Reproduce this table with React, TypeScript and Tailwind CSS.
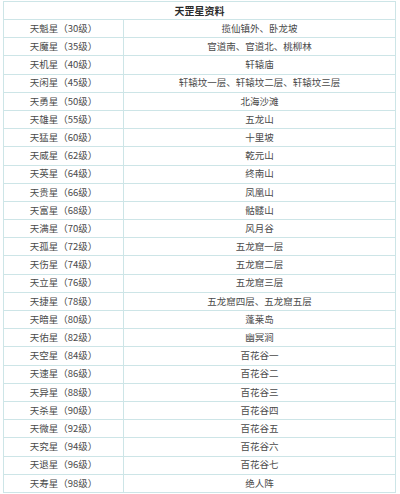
import React from 'react';

const rows: [string, string][] = [
  ['天魁星（30级）', '揽仙镇外、卧龙坡'],
  ['天魔星（35级）', '官道南、官道北、桃柳林'],
  ['天机星（40级）', '轩辕庙'],
  ['天闲星（45级）', '轩辕坟一层、轩辕坟二层、轩辕坟三层'],
  ['天勇星（50级）', '北海沙滩'],
  ['天雄星（55级）', '五龙山'],
  ['天猛星（60级）', '十里坡'],
  ['天威星（62级）', '乾元山'],
  ['天英星（64级）', '终南山'],
  ['天贵星（66级）', '凤凰山'],
  ['天富星（68级）', '骷髅山'],
  ['天满星（70级）', '风月谷'],
  ['天孤星（72级）', '五龙窟一层'],
  ['天伤星（74级）', '五龙窟二层'],
  ['天立星（76级）', '五龙窟三层'],
  ['天捷星（78级）', '五龙窟四层、五龙窟五层'],
  ['天暗星（80级）', '蓬莱岛'],
  ['天佑星（82级）', '幽冥涧'],
  ['天空星（84级）', '百花谷一'],
  ['天速星（86级）', '百花谷二'],
  ['天异星（88级）', '百花谷三'],
  ['天杀星（90级）', '百花谷四'],
  ['天微星（92级）', '百花谷五'],
  ['天究星（94级）', '百花谷六'],
  ['天退星（96级）', '百花谷七'],
  ['天寿星（98级）', '绝人阵'],
];

export default function App() {
  return (
    <div
      className="w-[400px] h-[494px] bg-white pt-[1px] pl-[3px] overflow-hidden text-[9.5px] text-[#4a4a4a]"
      style={{ fontFamily: '"Noto Sans CJK SC", "Noto Sans", sans-serif' }}
    >
      <div className="w-[393px] border-t border-l border-r border-[#cde5e7]">
        {/* Title */}
        <div className="h-[18px] flex items-center justify-center border-b border-[#cde5e7] font-bold text-[10px] text-[#2a2a2a] leading-none">
          天罡星资料
        </div>
        {rows.map(([star, place]) => (
          <div key={star} className="h-[18.2px] flex border-b border-[#cde5e7] leading-none">
            <div className="w-[120px] flex items-center justify-center border-r border-[#cde5e7]">
              {star}
            </div>
            <div className="flex-1 flex items-center justify-center">{place}</div>
          </div>
        ))}
      </div>
    </div>
  );
}
